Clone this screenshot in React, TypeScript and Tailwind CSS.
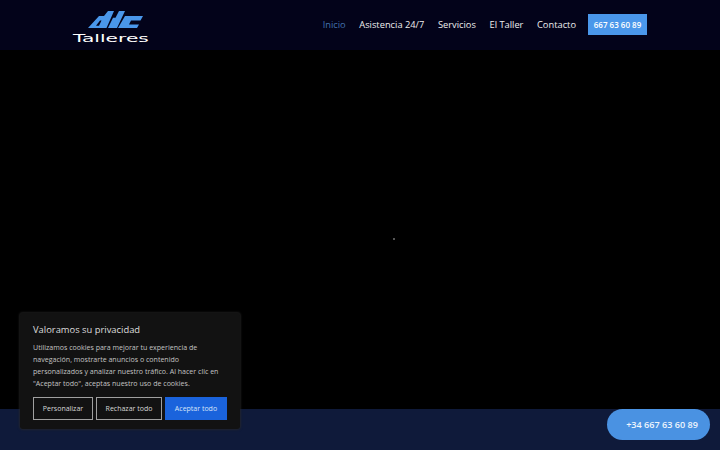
export default function App() {
  const links = ["Asistencia 24/7", "Servicios", "El Taller", "Contacto"];
  return (
    <div className="relative flex h-[450px] w-[720px] flex-col overflow-hidden bg-black font-['Open_Sans',sans-serif]">
      <header className="flex h-[50px] items-start justify-between bg-[#03031a] pl-[72px] pr-[73px]">
        <div className="relative mt-[11px] h-[31px] w-[80px]">
          <svg viewBox="0 0 55 16" className="absolute left-[16px] top-0 h-[18px] w-[55px]" preserveAspectRatio="none">
            <path fill="#4a97ea" d="M0 15 L11 4.5 H16 L20 0 H26 L18.5 15 Z" />
            <path fill="#03031a" d="M8 13 L12 8.5 H13.5 L11 13 Z" />
            <path fill="#4a97ea" d="M20 15 L25 6 H27.5 L31 0 H37 L29 15 Z" />
            <path fill="#4a97ea" d="M30 15 L37 4.5 H55 L52.5 8.5 H43 L41 12 H51 L49 15 Z" />
          </svg>
          <span className="absolute left-[1px] top-[22px] origin-left scale-x-[2.02] text-[10px] leading-[11px] text-white font-['DejaVu_Sans',sans-serif]">
            Talleres
          </span>
        </div>
        <nav className="flex items-start">
          <a className="mt-[18px] text-[9.3px] font-medium leading-[14px] text-[#4272ae]">Inicio</a>
          {links.map((l) => (
            <a key={l} className="ml-[13.6px] mt-[18px] text-[9.3px] font-medium leading-[14px] text-[#eeeeee]">
              {l}
            </a>
          ))}
          <a className="ml-[12px] mt-[14px] flex h-[21px] w-[59px] items-center justify-center bg-[#4a97ea] text-[8px] font-semibold text-white">
            667 63 60 89
          </a>
        </nav>
      </header>
      <main className="relative flex-1 bg-black">
        <span className="absolute left-[393px] top-[188px] h-[2px] w-[2px] bg-[#555555]" />
      </main>
      <footer className="h-[41px] bg-[#0f1a3a]" />

      <div className="absolute left-[20px] top-[313px] h-[116px] w-[220px] rounded-[3px] bg-[#121212] px-[13px] pt-[10px] shadow-[0_0_2px_1px_rgba(40,40,40,0.7)]">
        <h2 className="text-[9.4px] font-medium leading-[14px] text-[#dddddd]">Valoramos su privacidad</h2>
        <p className="mt-[4px] text-[7.05px] leading-[12px] text-[#c4c4c4]">
          Utilizamos cookies para mejorar tu experiencia de navegación, mostrarte anuncios o contenido personalizados y analizar nuestro tráfico. Al hacer clic en "Aceptar todo", aceptas nuestro uso de cookies.
        </p>
        <div className="mt-[8px] flex gap-[3px]">
          <button className="h-[23px] w-[60px] border border-[#a0a0a0] pt-[1px] text-[7px] text-[#d8d8d8]">Personalizar</button>
          <button className="h-[23px] w-[66px] border border-[#a0a0a0] pt-[1px] text-[7px] text-[#d8d8d8]">Rechazar todo</button>
          <button className="h-[23px] w-[62px] bg-[#1a63dc] pt-[1px] text-[7px] text-[#d8e4f8]">Aceptar todo</button>
        </div>
      </div>

      <a className="absolute left-[607px] top-[409px] flex h-[31px] w-[103px] items-center justify-end rounded-full bg-[#4a92e2] pr-[12px] text-[9.1px] font-semibold text-[#eef5fd]">
        +34 667 63 60 89
      </a>
    </div>
  );
}
